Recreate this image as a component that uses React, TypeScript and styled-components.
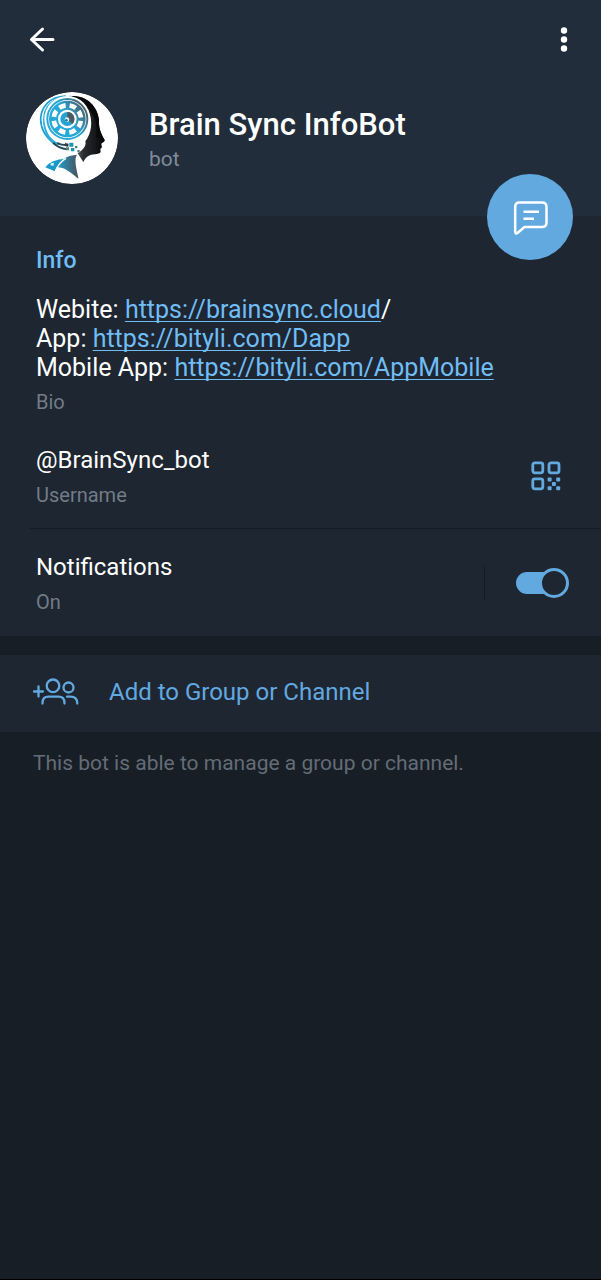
import React, { useState } from "react";
import styled, { createGlobalStyle } from "styled-components";

const color = {
  page: "#171e26",
  header: "#222d3b",
  panel: "#1e2631",
  line: "#151b22",
  accent: "#62a9e0",
  link: "#70bdf5",
  text: "#ffffff",
  muted: "#727c87",
};

const GlobalStyle = createGlobalStyle`
  *, *::before, *::after { box-sizing: border-box; }
  body {
    margin: 0;
    background: ${color.page};
    color: ${color.text};
    font-family: Roboto, "Liberation Sans", sans-serif;
  }
  button { font: inherit; color: inherit; border: 0; padding: 0; cursor: pointer; background: none; }
  svg { display: block; }
`;

const Screen = styled.main`
  min-height: 100vh;
  background: ${color.page};
  border-bottom: 1px solid #000;
`;

const Header = styled.header`
  position: relative;
  background: ${color.header};
  padding-bottom: 32px;
`;

const Toolbar = styled.div`
  display: flex;
  justify-content: space-between;
  align-items: center;
  height: 80px;
  padding: 0 20px;
  margin-bottom: 12px;
`;

const IconButton = styled.button`
  display: grid;
  place-items: center;
  flex: none;
`;

const Profile = styled.div`
  display: flex;
  align-items: center;
  gap: 31px;
  padding: 0 26px;
`;

const Identity = styled.div`
  padding-top: 2px;
`;

const Name = styled.h1`
  margin: 0;
  font-size: 31px;
  line-height: 36px;
  font-weight: 500;
`;

const Status = styled.p`
  margin: 4px 0 0;
  font-size: 21px;
  line-height: 24px;
  color: #7f8b98;
`;

const MessageButton = styled.button`
  position: absolute;
  right: 28px;
  bottom: -44px;
  display: grid;
  place-items: center;
  width: 86px;
  height: 86px;
  padding: 2px 0 0 2px;
  border-radius: 50%;
  background: ${color.accent};
`;

const Panel = styled.section`
  background: ${color.panel};
`;

const SectionTitle = styled.h2`
  margin: 0;
  padding: 30px 36px 0;
  font-size: 23px;
  line-height: 29px;
  font-weight: 500;
  color: ${color.link};
`;

const Row = styled.div<{ $top: number; $bottom: number }>`
  display: flex;
  align-items: center;
  justify-content: space-between;
  padding: ${(p) => p.$top}px 32px ${(p) => p.$bottom}px 36px;
`;

const Value = styled.div`
  display: block;
  font-size: 24px;
  line-height: 29px;
`;

const BioLine = styled(Value)`
  font-size: 25px;
`;

const Caption = styled.div`
  margin-top: 8px;
  font-size: 20px;
  line-height: 24px;
  color: ${color.muted};
`;

const Link = styled.a`
  color: ${color.link};
  text-decoration: underline;
  text-decoration-thickness: 1px;
  text-underline-offset: 3px;
  text-decoration-skip-ink: none;
`;

const QrButton = styled(IconButton)`
  margin: 0 8px 2px 0;
`;

const Divider = styled.hr`
  margin: 0 0 0 30px;
  border: 0;
  height: 1px;
  background: ${color.line};
`;

const SwitchArea = styled.div`
  display: flex;
  align-items: center;
  height: 36px;
  margin-bottom: 2px;
  padding-left: 31px;
  border-left: 1px solid ${color.line};
`;

const Switch = styled.input`
  appearance: none;
  display: grid;
  align-items: center;
  width: 53px;
  height: 31px;
  margin: 0;
  cursor: pointer;

  &::before {
    content: "";
    grid-area: 1 / 1;
    width: 44px;
    height: 22px;
    border-radius: 11px;
    background: ${color.muted};
  }
  &::after {
    content: "";
    grid-area: 1 / 1;
    width: 30px;
    height: 30px;
    border: 3px solid ${color.muted};
    border-radius: 50%;
    background: ${color.panel};
  }
  &:checked::before { background: ${color.accent}; }
  &:checked::after { border-color: ${color.accent}; justify-self: end; }
`;

const Gap = styled.div`
  height: 19px;
`;

const ActionButton = styled.button`
  display: flex;
  align-items: center;
  gap: 30px;
  width: 100%;
  height: 77px;
  padding: 0 32px 3px;
  font-size: 24px;
  line-height: 29px;
  color: ${color.accent};
`;

const Note = styled.p`
  margin: 0;
  padding: 18px 33px;
  font-size: 21px;
  line-height: 26px;
  color: #646c76;
`;

const BackIcon = () => (
  <svg width="44" height="44" viewBox="0 0 44 44" fill="none" stroke="#fff" strokeWidth="3" strokeLinecap="round" strokeLinejoin="round">
    <path d="M33 21.5H11.5M22.5 11L11.5 21.5L22.5 32" />
  </svg>
);

const MoreIcon = () => (
  <svg width="34" height="44" viewBox="0 0 34 44" fill="#fff">
    <circle cx="17" cy="12.5" r="3.2" />
    <circle cx="17" cy="21.5" r="3.2" />
    <circle cx="17" cy="30.5" r="3.2" />
  </svg>
);

const MessageIcon = () => (
  <svg width="36" height="36" viewBox="0 0 36 36" fill="none" stroke="#fff" strokeWidth="2.5" strokeLinecap="round" strokeLinejoin="round">
    <path d="M6.5 2.5H29Q33.5 2.5 33.5 7V22.5Q33.5 27 29 27H11.5L4.2 33.2Q2.2 34.2 2.2 31.5V7Q2.2 2.5 6.5 2.5Z" />
    <path d="M10.5 11.7H26M10.5 18.7H21" strokeLinecap="butt" />
  </svg>
);

const QrIcon = () => (
  <svg width="30" height="30" viewBox="0 0 30 30" fill="none" stroke={color.accent} strokeWidth="2.8">
    <rect x="1.8" y="1.8" width="10" height="10" rx="2" />
    <rect x="18" y="1.8" width="10" height="10" rx="2" />
    <rect x="1.8" y="17.8" width="10" height="10" rx="2" />
    <g fill={color.accent} stroke="none">
      <rect x="16.6" y="16.6" width="4" height="4" rx="1" />
      <rect x="25.2" y="16.6" width="4" height="4" rx="1" />
      <rect x="20.9" y="20.9" width="4" height="4" rx="1" />
      <rect x="16.6" y="25.2" width="4" height="4" rx="1" />
      <rect x="25.2" y="25.2" width="4" height="4" rx="1" />
    </g>
  </svg>
);

const AddGroupIcon = () => (
  <svg width="47" height="28" viewBox="0 0 47 28" fill="none" stroke={color.accent} strokeWidth="2.3" strokeLinecap="round">
    <path d="M2 13.5H11M6.5 8.5V18.5" />
    <circle cx="21" cy="7.8" r="6.3" />
    <circle cx="36.5" cy="9.5" r="5" />
    <path d="M10.5 25.5V25Q10.5 18.7 16.5 18.7H26.5Q32.5 18.7 32.5 25V25.5" />
    <path d="M35 18.7H38.5Q45.3 18.7 45.3 25.5" />
  </svg>
);

const Avatar = () => (
  <svg width="92" height="92" viewBox="30 24 276 276" role="img" aria-label="Brain Sync logo">
    <defs>
      <clipPath id="disc"><circle cx="168" cy="162" r="138" /></clipPath>
      <linearGradient id="shade" x1="0" x2="1">
        <stop offset="0" stopColor="#9aa0a3" />
        <stop offset="0.45" stopColor="#2a2d30" />
        <stop offset="1" stopColor="#050607" />
      </linearGradient>
      <linearGradient id="wheel" gradientUnits="userSpaceOnUse" x1="100" y1="150" x2="212" y2="75">
        <stop offset="0.55" stopColor="#26a9d8" />
        <stop offset="1" stopColor="#4b5c66" />
      </linearGradient>
      <linearGradient id="neck" x1="0" x2="1">
        <stop offset="0" stopColor="#249dca" />
        <stop offset="1" stopColor="#47535b" />
      </linearGradient>
    </defs>
    <g clipPath="url(#disc)">
      <circle cx="168" cy="162" r="138" fill="#fff" />
      <path d="M150 38C205 28 244 62 249 108C248 130 252 144 266 168C268 174 257 176 256 180L258 190L253 195L254 204C250 213 226 208 216 217C206 224 205 230 202 234L185 208C202 198 212 184 208 172C226 150 232 110 218 84C204 54 180 42 150 38Z" fill="url(#shade)" />
      <path d="M150 38C205 28 244 62 249 108C248 130 252 144 266 168L240 160C250 110 226 56 150 38Z" fill="#08090a" />
      <g fill="none" strokeLinecap="round">
        <path d="M148 36C101 38 76 68 74 103C73 137 94 163 113 178" stroke="#20a0d0" strokeWidth="5" />
        <path d="M165 38C113 38 84 66 84 107C84 145 103 169 126 180" stroke="#2caed9" strokeWidth="6" />
        <path d="M113 178Q129 193 148 195M126 178Q136 183 148 183" stroke="#26465a" strokeWidth="6" />
      </g>
      <circle cx="154" cy="105" r="69" fill="#fff" />
      <circle cx="154" cy="105" r="60" fill="#fff" stroke="url(#wheel)" strokeWidth="6" />
      <circle cx="154" cy="105" r="55" fill="url(#wheel)" />
      <circle cx="154" cy="105" r="41" fill="none" stroke="#fff" strokeWidth="14" strokeDasharray="20 12.2" transform="rotate(8 154 105)" />
      <circle cx="154" cy="105" r="28" fill="#fff" />
      <circle cx="154" cy="105" r="21" fill="#26a3d1" />
      <path d="M154 105V84A21 21 0 0 1 169 120Z" fill="#4c5b62" />
      <circle cx="153" cy="107" r="7" fill="#d8f0f8" />
      <circle cx="151" cy="109" r="4" fill="#117caf" />
      <path d="M147 177L158 179L157 188L147 187Z" fill="#303a3f" />
      <path d="M160 176H172V188H160ZM165 192H175V202H165Z" fill="#1596b8" />
      <path d="M177 186H184V193H177ZM184 198H191V205H184ZM150 190H159V199H150Z" fill="#5b7780" />
      <path d="M124 249C134 224 156 214 183 212C174 225 180 250 188 284C170 272 157 258 139 252Z" fill="url(#neck)" />
      <path d="M88 250Q104 226 150 224Q126 238 116 262Z" fill="#1b9ac9" />
      <path d="M150 223Q127 236 117 264" fill="none" stroke="#fff" strokeWidth="4" />
      <path d="M105 238L114 236L112 246L103 243Z" fill="#d6f1fa" />
    </g>
  </svg>
);

export default function App() {
  const [notify, setNotify] = useState(true);
  return (
    <>
      <GlobalStyle />
      <Screen>
        <Header>
          <Toolbar>
            <IconButton aria-label="Back"><BackIcon /></IconButton>
            <IconButton aria-label="More options"><MoreIcon /></IconButton>
          </Toolbar>
          <Profile>
            <Avatar />
            <Identity>
              <Name>Brain Sync InfoBot</Name>
              <Status>bot</Status>
            </Identity>
          </Profile>
          <MessageButton aria-label="Send message"><MessageIcon /></MessageButton>
        </Header>

        <Panel>
          <SectionTitle>Info</SectionTitle>
          <Row $top={20} $bottom={16}>
            <div>
              <BioLine>Webite: <Link href="https://brainsync.cloud">https://brainsync.cloud</Link>/</BioLine>
              <BioLine>App: <Link href="https://bityli.com/Dapp">https://bityli.com/Dapp</Link></BioLine>
              <BioLine>Mobile App: <Link href="https://bityli.com/AppMobile">https://bityli.com/AppMobile</Link></BioLine>
              <Caption>Bio</Caption>
            </div>
          </Row>
          <Row $top={16} $bottom={21}>
            <div>
              <Value>@BrainSync_bot</Value>
              <Caption>Username</Caption>
            </div>
            <QrButton aria-label="Show QR code"><QrIcon /></QrButton>
          </Row>
          <Divider />
          <Row $top={24} $bottom={22}>
            <div>
              <Value as="label" htmlFor="notifications">Notifications</Value>
              <Caption>{notify ? "On" : "Off"}</Caption>
            </div>
            <SwitchArea>
              <Switch id="notifications" type="checkbox" checked={notify} onChange={(e) => setNotify(e.target.checked)} />
            </SwitchArea>
          </Row>
        </Panel>

        <Gap />

        <Panel>
          <ActionButton>
            <AddGroupIcon />
            Add to Group or Channel
          </ActionButton>
        </Panel>
        <Note>This bot is able to manage a group or channel.</Note>
      </Screen>
    </>
  );
}
